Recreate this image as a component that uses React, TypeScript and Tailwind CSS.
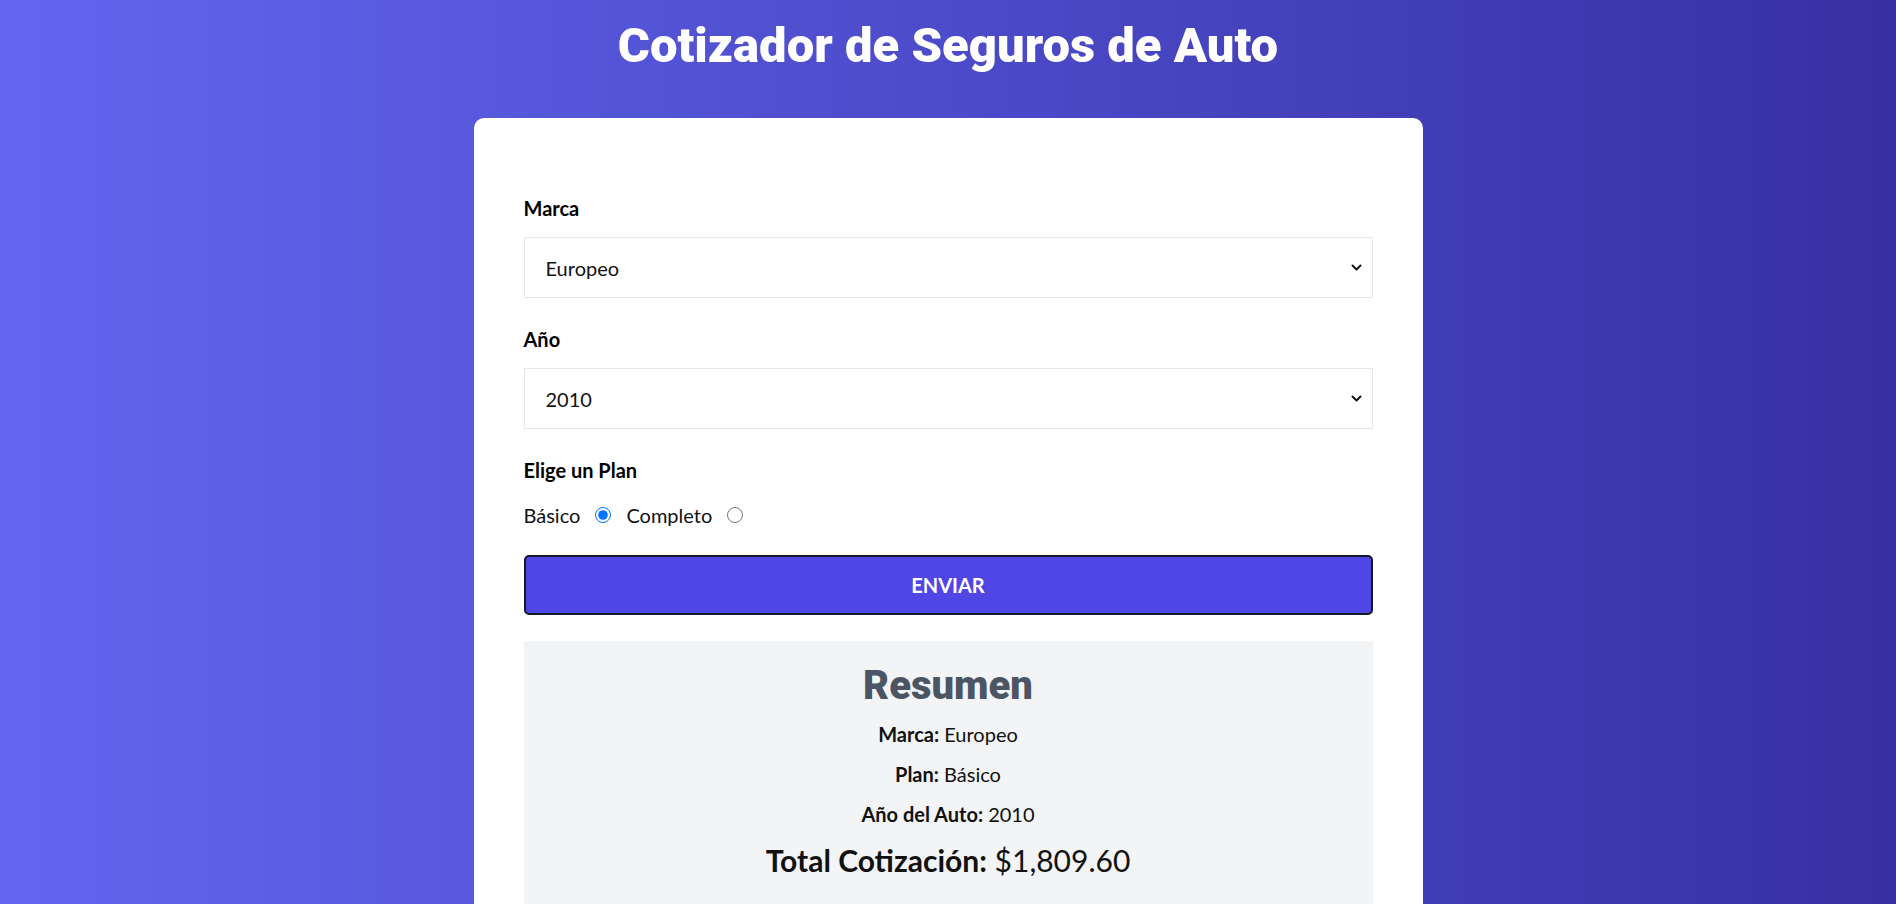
import { useState } from "react";

const marcas = ["Europeo", "Americano", "Asiático"];
const years = Array.from({ length: 20 }, (_, i) => 2024 - i);

function Chevron() {
  return (
    <svg className="pointer-events-none absolute right-[11px] top-1/2 -translate-y-1/2" width="11" height="8" viewBox="0 0 11 8" fill="none">
      <path d="M1.5 1.5 L5.5 5.5 L9.5 1.5" stroke="#111" strokeWidth="2" strokeLinecap="round" strokeLinejoin="round" />
    </svg>
  );
}

export default function App() {
  const [marca, setMarca] = useState("Europeo");
  const [year, setYear] = useState("2010");
  const [plan, setPlan] = useState("basico");

  return (
    <div className="min-h-screen bg-linear-to-r from-[#6366f1] to-[#3730a3] font-['Lato',sans-serif] text-black">
      <h1 className="pt-[19px] text-center font-['Roboto',sans-serif] text-[49px] font-black leading-[54px] text-white">
        Cotizador de Seguros de Auto
      </h1>

      <div className="mx-auto mt-[45px] w-[949px] rounded-[10px] bg-white px-[50px] pt-[75px] pb-[50px]">
        <form onSubmit={(e) => e.preventDefault()} className="flex flex-col">
          <label className="text-[20px] font-bold leading-[30px]">Marca</label>
          <div className="relative mt-[14px]">
            <select
              value={marca}
              onChange={(e) => setMarca(e.target.value)}
              className="h-[61px] w-full appearance-none border border-[#e5e7eb] bg-white pl-[21px] text-[20px] text-[#111] outline-none"
            >
              {marcas.map((m) => (
                <option key={m} value={m}>{m}</option>
              ))}
            </select>
            <Chevron />
          </div>

          <label className="mt-[26px] text-[20px] font-bold leading-[30px]">Año</label>
          <div className="relative mt-[14px]">
            <select
              value={year}
              onChange={(e) => setYear(e.target.value)}
              className="h-[61px] w-full appearance-none border border-[#e5e7eb] bg-white pl-[21px] text-[20px] text-[#111] outline-none"
            >
              {years.map((y) => (
                <option key={y} value={y}>{y}</option>
              ))}
            </select>
            <Chevron />
          </div>

          <label className="mt-[26px] text-[20px] font-bold leading-[30px]">Elige un Plan</label>
          <div className="mt-[15px] flex items-center text-[20px] leading-[30px] text-[#111]">
            <span>Básico</span>
            <input
              type="radio"
              name="plan"
              checked={plan === "basico"}
              onChange={() => setPlan("basico")}
              className="mr-[15px] ml-[15px] h-[16px] w-[16px] accent-[#0075ff]"
            />
            <span>Completo</span>
            <input
              type="radio"
              name="plan"
              checked={plan === "completo"}
              onChange={() => setPlan("completo")}
              className="ml-[15px] h-[16px] w-[16px] accent-[#0075ff]"
            />
          </div>

          <button
            type="submit"
            className="mt-[25px] h-[60px] w-full rounded-[5px] border-2 border-[#111827] bg-[#4f46e5] text-[20px] font-bold uppercase text-white"
          >
            Enviar
          </button>
        </form>

        <div className="mt-[26px] flex flex-col items-center bg-[#f3f4f6] pt-[22px] pb-[26px] text-[20px] leading-[30px] text-[#111]">
          <h2 className="font-['Roboto',sans-serif] text-[40px] font-black leading-[46px] text-[#4b5563]">Resumen</h2>
          <p className="mt-[10px]"><span className="font-bold">Marca:</span> {marca}</p>
          <p className="mt-[10px]"><span className="font-bold">Plan:</span> {plan === "basico" ? "Básico" : "Completo"}</p>
          <p className="mt-[10px]"><span className="font-bold">Año del Auto:</span> {year}</p>
          <p className="mt-[11px] text-[30px] leading-[40px]"><span className="font-bold">Total Cotización:</span> $1,809.60</p>
        </div>
      </div>
    </div>
  );
}
